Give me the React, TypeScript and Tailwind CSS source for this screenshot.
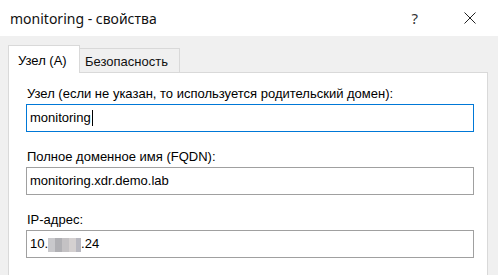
import React from 'react';

const Field: React.FC<{ label: string; focused?: boolean; children: React.ReactNode }> = ({ label, focused, children }) => (
  <div className="flex flex-col">
    <div className="h-[20px] leading-[20px] pl-[1px]">{label}</div>
    <div
      className={
        'h-[28px] flex items-center px-[3px] border bg-white ' +
        (focused ? 'border-[#0078d7]' : 'border-[#a0a0a0]')
      }
    >
      {children}
    </div>
  </div>
);

export default function App() {
  return (
    <div className="w-[498px] h-[275px] overflow-hidden bg-[#f0f0f0] text-[13px] text-black font-['Liberation_Sans',Arial,sans-serif]">
      {/* title bar */}
      <div className="h-[36px] bg-white flex items-center pl-[10px] pr-[22px]">
        <span className="text-[14px] font-['Noto_Sans',sans-serif] text-[#111]">monitoring - свойства</span>
        <span className="ml-auto mr-[46px] text-[15px] font-['Noto_Sans',sans-serif] text-[#333]">?</span>
        <svg width="12" height="12" viewBox="0 0 12 12" className="mb-[1px]">
          <path d="M0.5 0.5 L11.5 11.5 M11.5 0.5 L0.5 11.5" stroke="#222" strokeWidth="1" />
        </svg>
      </div>

      <div className="pl-[8px] pr-[10px] pt-[9px]">
        {/* tabs */}
        <div className="flex items-end h-[27px]">
          <div className="h-[28px] w-[72px] bg-white border border-[#d9d9d9] border-b-0 relative z-10 -mb-[1px] pl-[9px] pt-[5px] text-[13px]">
            Узел (А)
          </div>
          <div className="h-[24px] w-[100px] bg-[#f0f0f0] border border-[#d9d9d9] border-l-0 border-b-0 pl-[5px] pt-[3px] text-[#111]">
            Безопасность
          </div>
        </div>

        {/* panel */}
        <div className="bg-white border border-[#d9d9d9] h-[220px] pl-[17px] pr-[13px] pt-[11px] flex flex-col gap-[15px]">
          <Field label="Узел (если не указан, то используется родительский домен):" focused>
            <span>monitoring</span>
            <span className="w-px h-[16px] bg-black ml-[1px]" />
          </Field>
          <Field label="Полное доменное имя (FQDN):">
            <span>monitoring.xdr.demo.lab</span>
          </Field>
          <Field label="IP-адрес:">
            <span>10.</span>
            <span className="flex h-[14px] mt-[1px]">
              <span className="w-[7px] bg-[#c9c9cc]" />
              <span className="w-[7px] bg-[#b0b0b4]" />
              <span className="w-[7px] bg-[#c4c2c4]" />
              <span className="w-[7px] bg-[#d4d0d0]" />
              <span className="w-[5px] bg-[#b8b8c0]" />
            </span>
            <span>.24</span>
          </Field>
        </div>
      </div>
    </div>
  );
}
